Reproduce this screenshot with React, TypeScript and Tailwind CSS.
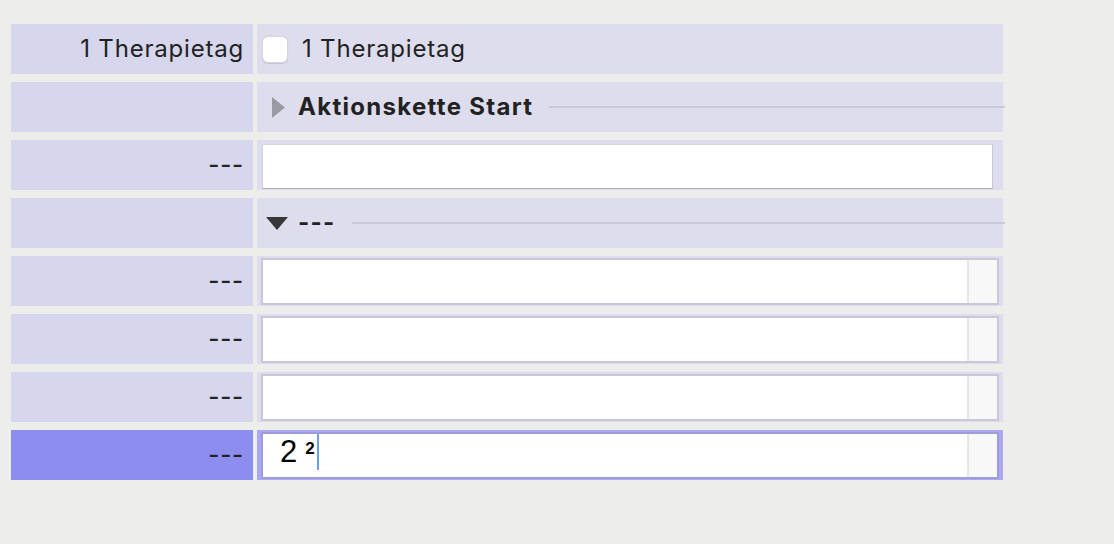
import React from 'react';

const font = { fontFamily: 'Inter, "Noto Sans", sans-serif' };

type Row =
  | { kind: 'check'; label: string; text: string }
  | { kind: 'section'; label: string; text: string; open: boolean }
  | { kind: 'plain'; label: string }
  | { kind: 'field'; label: string; value?: string; selected?: boolean };

const rows: Row[] = [
  { kind: 'check', label: '1 Therapietag', text: '1 Therapietag' },
  { kind: 'section', label: '', text: 'Aktionskette Start', open: false },
  { kind: 'plain', label: '---' },
  { kind: 'section', label: '', text: '---', open: true },
  { kind: 'field', label: '---' },
  { kind: 'field', label: '---' },
  { kind: 'field', label: '---' },
  { kind: 'field', label: '---', value: '2', selected: true },
];

// Input with the little stepper segment on the right
function Field({ value, selected }: { value?: string; selected?: boolean }) {
  return (
    <div
      className={`flex h-[47px] w-[738px] border-2 bg-white ${
        selected ? 'border-[#9d9cde]' : 'border-[#c9c7d9]'
      }`}
    >
      <div
        className="flex flex-1 items-center pb-[8px] pl-[17px] text-[31px] leading-none text-black"
        style={{ fontFamily: '"Liberation Sans", Arial, sans-serif' }}
      >
        {value && (
          <>
            <span>{value}</span>
            <span className="ml-[8px] -mt-[7px] text-[17px] font-bold">2</span>
          </>
        )}
        {selected && <span className="ml-[2px] h-[36px] w-[2px] bg-[#6b9ff5]" />}
      </div>
      <div className="w-[2px] bg-[#e6e6e6]" />
      <div className="w-[28px] bg-[#f8f8f8]" />
    </div>
  );
}

function RightCell({ row }: { row: Row }) {
  if (row.kind === 'check') {
    return (
      <div className="flex h-full items-center bg-[#dedded] pl-[5px]">
        <div className="h-[27px] w-[26px] rounded-[6px] border border-[#d6d6dc] bg-white shadow-[0_0.5px_1px_rgba(0,0,0,0.12)]" />
        <span className="ml-[14px] text-[24px] tracking-[0.8px] text-[#222]" style={font}>
          {row.text}
        </span>
      </div>
    );
  }
  if (row.kind === 'section') {
    return (
      <div className="flex h-full items-center bg-[#dedded]">
        {row.open ? (
          <svg width="22" height="13" viewBox="0 0 22 13" className="ml-[9px] mt-[1px]">
            <polygon points="0,0 22,0 11,13" fill="#383838" />
          </svg>
        ) : (
          <svg width="13" height="21" viewBox="0 0 13 21" className="ml-[15px]">
            <polygon points="0,0 13,10.5 0,21" fill="#9a9aa2" />
          </svg>
        )}
        <span
          className={`${row.open ? 'ml-[10px]' : 'ml-[13px]'} text-[24px] font-bold tracking-[1.3px] text-[#222]`}
          style={font}
        >
          {row.text}
        </span>
        <div className="ml-[16px] -mr-[2px] h-[2px] flex-1 bg-[#c9c7d9]" />
      </div>
    );
  }
  if (row.kind === 'plain') {
    return (
      <div className="flex h-full bg-[#dedded] pl-[5px] pt-[4px]">
        <div className="h-[45px] w-[731px] border border-l-[#cfcde0] border-t-[#d6d4e4] border-r-[#c8c6d8] border-b-[#aeacbe] bg-white" />
      </div>
    );
  }
  return (
    <div className={`h-full pl-[4px] pt-[2px] ${row.selected ? 'bg-[#a9a8f0]' : 'bg-[#dedded]'}`}>
      <Field value={row.value} selected={row.selected} />
    </div>
  );
}

export default function App() {
  return (
    <div className="min-h-[544px] w-full bg-[#ededeb] pl-[11px] pt-[24px]">
      <div className="grid grid-cols-[242px_746px] gap-x-[4px] gap-y-[8px]">
        {rows.map((row, i) => {
          const selected = row.kind === 'field' && row.selected;
          return (
            <React.Fragment key={i}>
              <div
                className={`flex h-[50px] items-center justify-end pr-[9px] text-[24px] tracking-[0.8px] text-[#222] ${
                  row.label === '---' ? 'font-medium' : ''
                } ${selected ? 'bg-[#8d8cef]' : 'bg-[#d6d6ec]'}`}
                style={font}
              >
                {row.label}
              </div>
              <div className="h-[50px]">
                <RightCell row={row} />
              </div>
            </React.Fragment>
          );
        })}
      </div>
    </div>
  );
}
